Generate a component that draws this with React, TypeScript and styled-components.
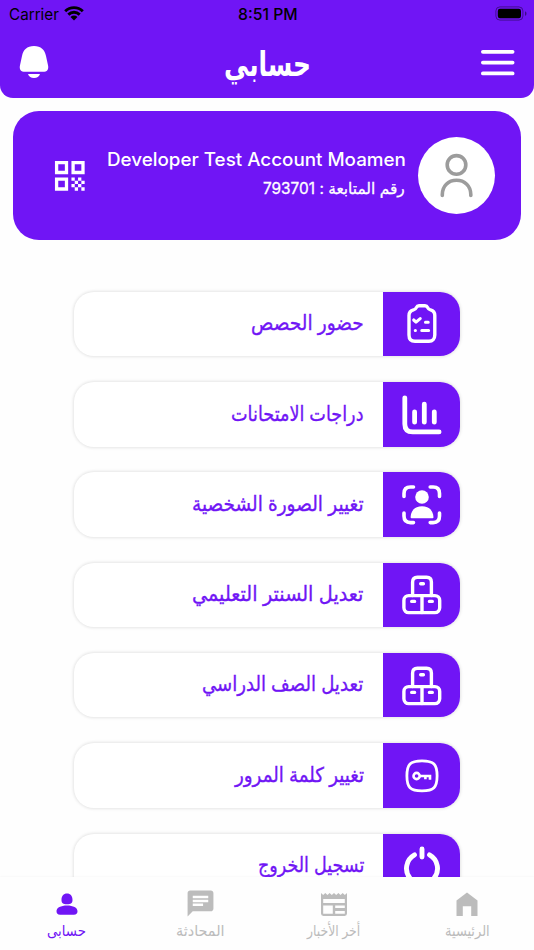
import React, { useLayoutEffect, useRef, useState } from "react";
import styled, { createGlobalStyle } from "styled-components";
import { MdChat, MdQrCode } from "react-icons/md";

const purple = "#7015f5";
const muted = "#bcbcbc";

const GlobalStyle = createGlobalStyle`
  * { box-sizing: border-box; }
  body { margin: 0; background: #fff; overflow: hidden; }
  svg { display: block; flex: none; }
`;

const Screen = styled.div`
  width: 534px;
  height: 950px;
  display: flex;
  flex-direction: column;
  overflow: hidden;
  background: #fefefe;
  font-family: Inter, "DejaVu Sans", sans-serif;
`;

const Header = styled.header`
  flex: none;
  height: 98px;
  background: ${purple};
  border-radius: 0 0 13px 13px;
`;

const StatusBar = styled.div`
  height: 27px;
  display: grid;
  grid-template-columns: 1fr auto 1fr;
  align-items: center;
  padding: 0 7px 0 9px;
  color: #000;
`;

const Carrier = styled.div`
  display: flex;
  align-items: center;
  gap: 5.4px;
`;

const BatterySlot = styled.div`
  justify-self: end;
`;

const TitleBar = styled.div`
  height: 71px;
  display: grid;
  grid-template-columns: 1fr auto 1fr;
  align-items: center;
  padding: 0 19px 2px;
`;

const MenuSlot = styled.div`
  justify-self: end;
`;

type TextStyle = { $w: number; $size: number; $weight?: number; $color?: string; $rtl?: boolean; $stroke?: number };

const TextBox = styled.div<TextStyle>`
  width: ${(p) => p.$w}px;
  flex: none;
  font-size: ${(p) => p.$size}px;
  font-weight: ${(p) => p.$weight ?? 400};
  color: ${(p) => p.$color ?? "#fff"};
  -webkit-text-stroke: ${(p) => p.$stroke ?? 0}px currentColor;
  line-height: 1.25;
  white-space: nowrap;
  direction: ltr;

  & > span {
    display: inline-block;
    direction: ${(p) => (p.$rtl ? "rtl" : "ltr")};
    transform-origin: left center;
  }
`;

type LabelProps = {
  text: string;
  width: number;
  size: number;
  weight?: number;
  color?: string;
  rtl?: boolean;
  stroke?: number;
};

/* Condenses or widens a single line so that it fills its width. */
function Label({ text, width, size, weight, color, rtl, stroke }: LabelProps) {
  const ref = useRef<HTMLSpanElement>(null);
  const [scale, setScale] = useState(1);
  useLayoutEffect(() => {
    if (ref.current) setScale(width / ref.current.offsetWidth);
  }, [text, width, size]);
  return (
    <TextBox $w={width} $size={size} $weight={weight} $color={color} $rtl={rtl} $stroke={stroke}>
      <span ref={ref} style={{ transform: `scaleX(${scale})` }}>{text}</span>
    </TextBox>
  );
}

const TitleSlot = styled.div`
  padding-top: 5px;
`;

const Profile = styled.section`
  flex: none;
  height: 129px;
  margin: 13px 13px 0;
  padding: 0 26px 0 37px;
  display: flex;
  align-items: center;
  background: ${purple};
  border-radius: 26px;
`;

const ProfileText = styled.div`
  flex: 1;
  display: flex;
  flex-direction: column;
  align-items: flex-end;
  gap: 8px;
  padding: 0 13px 4px 0;
`;

const Avatar = styled.div`
  width: 77px;
  height: 77px;
  flex: none;
  border-radius: 50%;
  background: #fff;
`;

const List = styled.main`
  flex: 1;
  min-height: 0;
  overflow: hidden;
  padding: 51.9px 73.7px 0 73.5px;
  display: flex;
  flex-direction: column;
  gap: 25.9px;
`;

const Item = styled.div`
  flex: none;
  height: 64.4px;
  display: flex;
  align-items: stretch;
  border-radius: 20px;
  overflow: hidden;
  background: #fff;
  box-shadow: 0 0 3px 1px rgba(0, 0, 0, 0.1);
`;

const ItemText = styled.div`
  flex: 1;
  display: flex;
  align-items: center;
  justify-content: flex-end;
  padding: 0 19.3px 2px 0;
`;

const ItemIcon = styled.div`
  width: 77.3px;
  padding-top: 0.6px;
  display: flex;
  align-items: center;
  justify-content: center;
  background: ${purple};
`;

const TabBar = styled.nav`
  flex: none;
  height: 73px;
  display: grid;
  grid-template-columns: repeat(4, 1fr);
  background: #fefefe;
  box-shadow: 0 0 2px rgba(0, 0, 0, 0.06);
`;

const Tab = styled.div`
  display: flex;
  flex-direction: column;
  align-items: center;
  padding-top: 11px;
`;

const TabIcon = styled.div`
  height: 34px;
`;

const LineIcon = styled.svg.attrs({ width: 48, height: 48, viewBox: "0 0 48 48" })`
  fill: none;
  stroke: #fff;
  stroke-width: 3.4;
  stroke-linecap: round;
  stroke-linejoin: round;
`;

const ClipboardIcon = () => (
  <LineIcon>
    <path d="M15.5 9.9C17.4 9.5 17.8 8.7 18.3 7.6C18.9 6.3 19.8 5.7 21 5.7H27C28.2 5.7 29.1 6.3 29.7 7.6C30.2 8.7 30.6 9.5 32.5 9.9C35.2 10.6 36.8 12.5 36.8 15.5V35C36.8 39 34.5 41.3 31 41.3H17C13.2 41.3 11 39 11 35V15.5C11 12.5 12.8 10.6 15.5 9.9Z" />
    <path strokeWidth="3.1" d="M15.7 20L18 22.1L22.2 18.6M27.5 22.3H30.2M17.3 30.5H17.4M23.8 30.5H30.6" />
  </LineIcon>
);

const ChartIcon = () => (
  <LineIcon>
    <path strokeWidth="4.8" d="M6.8 6.8V33Q6.8 40.9 14.7 40.9H41.1M16.6 20.8V31.2M26.3 13.1V31.2M36.3 20.8V31.2" />
  </LineIcon>
);

const PortraitIcon = () => (
  <LineIcon>
    <path strokeWidth="3.6" d="M6 15.5V12.5Q6 6 12.5 6H15.5M32.2 6H35.2Q41.5 6 41.5 12.5V15.5M41.5 32V35Q41.5 41.6 35.2 41.6H32.2M15.5 41.6H12.5Q6 41.6 6 35V32" />
    <circle cx="24" cy="16" r="6.8" fill="#fff" stroke="none" />
    <path fill="#fff" stroke="none" d="M13.5 37.2Q12.6 37.2 12.6 36.2C12.8 29.4 17.2 25.3 24 25.3S35.2 29.4 35.5 36.2Q35.5 37.2 34.5 37.2Z" />
  </LineIcon>
);

const BoxesIcon = () => (
  <LineIcon>
    <path d="M14.6 24.6V11Q14.6 6.2 19.4 6.2H28.6Q33.4 6.2 33.4 11V24.6M24 24.6V41.6M22.7 12.7H25.4M13.7 30.4H16.6M31.4 30.4H34.3" />
    <rect x="5.9" y="24.6" width="35.8" height="17" rx="4.8" />
  </LineIcon>
);

const KeyIcon = () => (
  <LineIcon>
    <path strokeWidth="2.8" d="M24 8.8C35.8 8.8 39.1 12.1 39.1 23.8S35.8 38.8 24 38.8S8.9 35.5 8.9 23.8S12.2 8.8 24 8.8Z" />
    <circle cx="18.6" cy="24" r="3.1" strokeWidth="2.6" />
    <path strokeWidth="2.6" strokeLinecap="butt" strokeLinejoin="miter" d="M21.7 24H32V27.8M27.4 24V27.2" />
  </LineIcon>
);

const PowerIcon = () => (
  <LineIcon>
    <path strokeWidth="4.9" d="M24 7V15M16.5 12.9A15.5 15.5 0 1 0 31.5 12.9" />
  </LineIcon>
);

const BellIcon = () => (
  <svg width="30" height="34" viewBox="0 0 30 34" fill="#fff">
    <path d="M15 1C22 1 25.7 4.8 27 11L29 20.2C30 24.5 28 26.8 24 26.8H6C2 26.8 0 24.5 1 20.2L3 11C4.3 4.8 8 1 15 1ZM9 29H21C20.2 31.8 18 33 15 33S9.8 31.8 9 29Z" />
  </svg>
);

const MenuIcon = () => (
  <svg width="35" height="28" viewBox="0 0 35 28" stroke="#fff" strokeWidth="3.8" strokeLinecap="round">
    <path d="M2.9 3.8H32.6M2.9 14.6H32.6M2.9 25.4H32.6" />
  </svg>
);

const WifiIcon = () => (
  <svg width="20" height="15" viewBox="0 0 20 15" fill="none" stroke="#000" strokeWidth="2.9">
    <path d="M1.2 5.2C6.1 .4 13.9 .4 18.8 5.2M4.3 8.6C7.6 5.5 12.4 5.5 15.7 8.6" />
    <path fill="#000" stroke="none" d="M10 14.4L6.5 10.9C8.5 9.1 11.5 9.1 13.5 10.9Z" />
  </svg>
);

const BatteryIcon = () => (
  <svg width="32" height="15" viewBox="0 0 32 15">
    <rect x=".9" y=".9" width="27" height="13.2" rx="4" fill="none" stroke="#000" strokeOpacity=".4" />
    <rect x="2.8" y="2.8" width="23.2" height="9.4" rx="2.2" />
    <path d="M30 5.2C32 6 32 9 30 9.8Z" fillOpacity=".45" />
  </svg>
);

const AvatarIcon = () => (
  <svg width="77" height="77" viewBox="0 0 77 77" fill="none" stroke="#9c9c9c" strokeWidth="3.6" strokeLinecap="round">
    <circle cx="38.5" cy="27.9" r="9.3" />
    <path d="M24.3 58.4V57.6C24.3 48.9 30.3 43.3 38.5 43.3S52.8 48.9 52.8 57.6V58.4" />
  </svg>
);

const HomeIcon = () => (
  <svg width="32" height="32" viewBox="0 0 32 32" fill={muted}>
    <path d="M16 4.6L26.5 12.6V28H20.2V18.3H11.8V28H5.5V12.6Z" />
  </svg>
);

const NewsIcon = () => (
  <svg width="32" height="32" viewBox="0 0 32 32" fill={muted}>
    <path fillRule="evenodd" d="M3 5L5.2 7L7.3 5L9.5 7L11.6 5L13.8 7L16 5L18.2 7L20.4 5L22.5 7L24.7 5L26.8 7L29 5V25.6Q29 28 26.6 28H5.4Q3 28 3 25.6ZM5.2 11V14.9H26.8V11ZM5.2 17.6V25.7H14.8V17.6ZM17.2 17.6V20.1H26.8V17.6ZM17.2 22.9V25.7H26.8V22.9Z" />
  </svg>
);

const UserIcon = () => (
  <svg width="32" height="32" viewBox="0 0 32 32" fill={purple}>
    <path d="M16 5.6C19.5 5.6 21.5 8.2 21.5 12C21.5 15 20 16.2 16 16.2S10.5 15 10.5 12C10.5 8.2 12.5 5.6 16 5.6ZM16 17.6C22.2 17.6 26.5 19.8 26.5 23.3C26.5 25.6 25.3 26.7 22.9 26.7H9.1C6.7 26.7 5.5 25.6 5.5 23.3C5.5 19.8 9.8 17.6 16 17.6Z" />
  </svg>
);

const items = [
  { text: "حضور الحصص", width: 113, icon: <ClipboardIcon /> },
  { text: "دراجات الامتحانات", width: 132.5, icon: <ChartIcon /> },
  { text: "تغيير الصورة الشخصية", width: 171.5, icon: <PortraitIcon /> },
  { text: "تعديل السنتر التعليمي", width: 171.5, icon: <BoxesIcon /> },
  { text: "تعديل الصف الدراسي", width: 161.5, icon: <BoxesIcon /> },
  { text: "تغيير كلمة المرور", width: 129, icon: <KeyIcon /> },
  { text: "تسجيل الخروج", width: 106, icon: <PowerIcon /> },
];

const tabs = [
  { text: "حسابى", width: 39, icon: <UserIcon />, color: purple },
  { text: "المحادثة", width: 49, icon: <MdChat size={31} color={muted} />, color: muted },
  { text: "أخر الأخبار", width: 53, icon: <NewsIcon />, color: muted },
  { text: "الرئيسية", width: 45, icon: <HomeIcon />, color: muted },
];

export default function App() {
  return (
    <Screen>
      <GlobalStyle />
      <Header>
        <StatusBar>
          <Carrier>
            <Label text="Carrier" width={49.5} size={16} color="#000" />
            <WifiIcon />
          </Carrier>
          <Label text="8:51 PM" width={60} size={16} weight={550} color="#000" />
          <BatterySlot><BatteryIcon /></BatterySlot>
        </StatusBar>
        <TitleBar>
          <BellIcon />
          <TitleSlot>
            <Label text="حسابي" width={87} size={34} weight={700} rtl />
          </TitleSlot>
          <MenuSlot><MenuIcon /></MenuSlot>
        </TitleBar>
      </Header>
      <Profile>
        <MdQrCode size={39.6} color="#fff" />
        <ProfileText>
          <Label text="Developer Test Account Moamen" width={298.5} size={18.4} weight={500} />
          <Label text="رقم المتابعة : 793701" width={142} size={15.5} rtl stroke={0.3} />
        </ProfileText>
        <Avatar><AvatarIcon /></Avatar>
      </Profile>
      <List>
        {items.map((item) => (
          <Item key={item.text}>
            <ItemText>
              <Label text={item.text} width={item.width} size={20.5} color={purple} rtl stroke={0.35} />
            </ItemText>
            <ItemIcon>{item.icon}</ItemIcon>
          </Item>
        ))}
      </List>
      <TabBar>
        {tabs.map((tab) => (
          <Tab key={tab.text}>
            <TabIcon>{tab.icon}</TabIcon>
            <Label text={tab.text} width={tab.width} size={15} color={tab.color} rtl />
          </Tab>
        ))}
      </TabBar>
    </Screen>
  );
}
